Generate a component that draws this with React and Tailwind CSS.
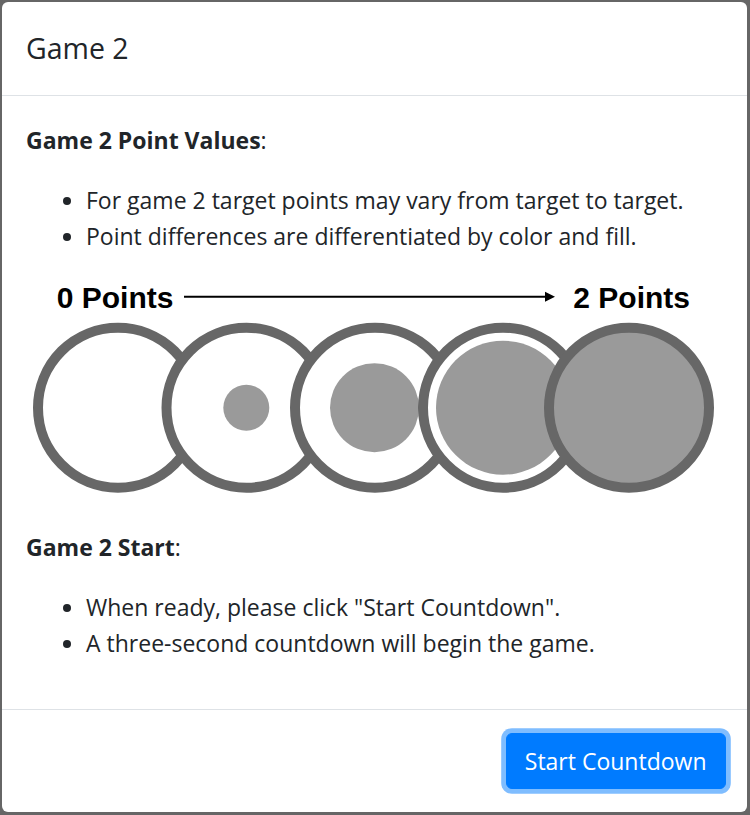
import React from "react";

const bodyFont = { fontFamily: '"Open Sans", "Noto Sans", sans-serif' };

const PointsDiagram = () => {
  const ring = "#676767";
  const fill = "#9a9a9a";
  const cy = 129.7;
  return (
    <svg viewBox="0 0 698 227" className="block w-[698px] h-[227px] mb-6">
      <text x="30.7" y="30.3" fontFamily='"Liberation Sans", Arial, sans-serif' fontWeight="700" fontSize="30" fill="#000">
        0 Points
      </text>
      <line x1="158" y1="18.7" x2="522" y2="18.7" stroke="#000" strokeWidth="2" />
      <path d="M519 13.7 L529 18.7 L519 23.7 Z" fill="#000" />
      <text x="547.3" y="30.3" fontFamily='"Liberation Sans", Arial, sans-serif' fontWeight="700" fontSize="30" fill="#000">
        2 Points
      </text>

      {/* targets, lowest value on the left */}
      <circle cx="92" cy={cy} r="80" fill="#fff" stroke={ring} strokeWidth="10" />
      <circle cx="220.5" cy={cy} r="80" fill="#fff" stroke={ring} strokeWidth="10" />
      <circle cx="220.3" cy={cy} r="23" fill={fill} />
      <circle cx="349" cy={cy} r="80" fill="#fff" stroke={ring} strokeWidth="10" />
      <circle cx="348.5" cy={cy} r="44.5" fill={fill} />
      <circle cx="477" cy={cy} r="80" fill="#fff" stroke={ring} strokeWidth="10" />
      <circle cx="477" cy={cy} r="67" fill={fill} />
      <circle cx="603" cy={cy} r="80" fill={fill} stroke={ring} strokeWidth="10" />
    </svg>
  );
};

export default function App() {
  return (
    <div className="w-[750px] h-[815px] bg-[#666] pt-[2px] pl-[2px] pr-[3px] pb-[3px]">
      <div className="h-full flex flex-col bg-white rounded-[6px] text-[#212529]" style={bodyFont}>
        {/* Header */}
        <div className="px-6 py-6 border-b-[1.5px] border-[#dee2e6]">
          <h5 className="text-[28.5px] leading-[45px] font-medium">Game 2</h5>
        </div>

        {/* Body */}
        <div className="flex-1 px-6 pt-[26px] pb-6 text-[23px] leading-[36px]">
          <p className="mb-6">
            <span className="font-bold">Game 2 Point Values</span>:
          </p>
          <ul className="list-disc pl-[60px] mb-6">
            <li>For game 2 target points may vary from target to target.</li>
            <li>Point differences are differentiated by color and fill.</li>
          </ul>

          <PointsDiagram />

          <p className="mb-6">
            <span className="font-bold">Game 2 Start</span>:
          </p>
          <ul className="list-disc pl-[60px]">
            <li>When ready, please click "Start Countdown".</li>
            <li>A three-second countdown will begin the game.</li>
          </ul>
        </div>

        {/* Footer */}
        <div className="flex justify-end border-t-[1.5px] border-[#dee2e6] pt-[23px] pb-[23px] pr-[21.5px]">
          <button className="bg-[#007bff] border-[1.5px] border-[#007bff] text-white text-[23px] leading-[36px] px-[18px] py-[9px] rounded-[6px] shadow-[0_0_0_4.8px_rgba(0,123,255,0.5)]">
            Start Countdown
          </button>
        </div>
      </div>
    </div>
  );
}
